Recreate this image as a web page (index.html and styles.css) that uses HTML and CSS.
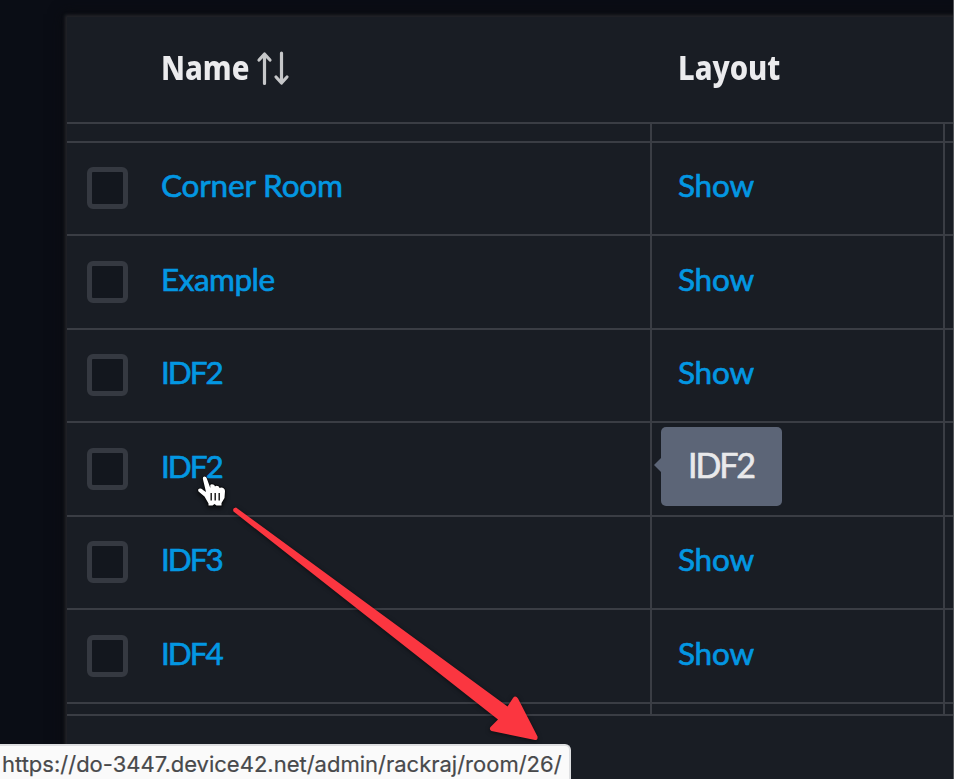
FILE: index.html
```html
<!DOCTYPE html>
<html lang="en">
<head>
<meta charset="utf-8">
<title>Rooms</title>
<link rel="stylesheet" href="styles.css">
</head>
<body>
<main class="panel">
  <div class="head">
    <div class="cell check"></div>
    <div class="cell name"><span class="label">Name</span><svg class="sort" width="34" height="36" viewBox="0 0 34 36"><path d="M8.500 32.500V3M3 9l5.500-6L14 9M25.500 2v29.500M20 26l5.500 6L31 26"/></svg></div>
    <div class="cell layout"><span class="label">Layout</span></div>
  </div>
  <div class="row spacer"><div class="cell main"></div><div class="cell layout"></div><div class="cell rest"></div></div>
  <div class="row"><div class="cell main"><span class="box"></span><a class="corner">Corner Room</a></div><div class="cell layout"><a class="show">Show</a></div><div class="cell rest"></div></div>
  <div class="row"><div class="cell main"><span class="box"></span><a class="example">Example</a></div><div class="cell layout"><a class="show">Show</a></div><div class="cell rest"></div></div>
  <div class="row"><div class="cell main"><span class="box"></span><a class="idf">IDF2</a></div><div class="cell layout"><a class="show">Show</a></div><div class="cell rest"></div></div>
  <div class="row"><div class="cell main"><span class="box"></span><a class="idf">IDF2</a></div><div class="cell layout"></div><div class="cell rest"></div></div>
  <div class="row"><div class="cell main"><span class="box"></span><a class="idf">IDF3</a></div><div class="cell layout"><a class="show">Show</a></div><div class="cell rest"></div></div>
  <div class="row"><div class="cell main"><span class="box"></span><a class="idf">IDF4</a></div><div class="cell layout"><a class="show">Show</a></div><div class="cell rest"></div></div>
  <div class="row foot"><div class="cell main"></div><div class="cell layout"></div><div class="cell rest"></div></div>
</main>
<div class="tooltip"><span>IDF2</span></div>
<svg class="overlay" width="954" height="779" viewBox="0 0 954 779">
  <path class="arrow" d="M233.500 511.500Q232 508 236 507.500L507.500 706.500L513 698Q515.500 695 518 698.500L537.500 736.500Q538 740 535 740L491.500 731Q488.500 729 491 726.500L498 719.500Z"/>
  <path class="hand" d="M203 479.500C202 476 206 475.500 207 479L210.300 488V485C211 483.500 214.500 484 215 486.500C216 485 219 485.500 219.500 488C221.500 486.500 225 488 225 491L224.500 498L221.500 503V505.500H216.500L214.500 504L212.500 505.500H208.500V503.500L204.500 496.500L198.500 491.500C197 488.500 200.500 487.500 203 490L206 492Z"/>
  <path class="creases" d="M211.200 493V500.500M215.200 493V500.500M219.200 493V500.500"/>
</svg>
<div class="status"><span>https://do-3447.device42.net/admin/rackraj/room/26/</span></div>
<div class="edge"></div>
</body>
</html>
```
FILE: styles.css
```css
* { box-sizing: border-box; }
body {
  margin: 0;
  width: 954px;
  height: 779px;
  padding: 17px 0 0 67px;
  overflow: hidden;
  position: relative;
  background: #0a0d15;
  font-family: Lato, sans-serif;
}
.panel {
  width: 900px;
  height: 780px;
  background: #191d24;
  box-shadow: 0 0 3px 2px #25262b, 0 0 14px 3px #0b0c0f;
}
.head {
  display: flex;
  height: 107px;
  padding-bottom: 4px;
  border-bottom: 2px solid #3a3d44;
  color: #ebebed;
  font: 800 33px "Noto Sans", sans-serif;
}
.head .cell { display: flex; align-items: center; }
.head .check { width: 94px; }
.head .name { width: 517px; }
.label { transform: scaleX(.885); transform-origin: left; }
.sort { margin: 2px 0 0 -5px; fill: none; stroke: #c6c7c9; stroke-width: 3.200; stroke-linecap: round; stroke-linejoin: round; }
.row {
  display: grid;
  grid-template-columns: 585px 293px 1fr;
  height: 93.5px;
}
.spacer { height: 16.75px; }
.foot { height: 14.25px; border-bottom: 2px solid #3a3d44; }
.row .cell {
  display: flex;
  align-items: center;
  border-top: 2px solid #3a3d44;
}
.spacer .cell { border-top: 0; }
.row .layout, .row .rest { border-left: 2px solid #3a3d44; margin-left: -2px; }
.row .main { padding-left: 20px; }
.row .layout { padding-left: 26px; }
.box {
  width: 41px;
  height: 42px;
  margin: 0 33px 1px 0;
  border: 5px solid #353941;
  border-radius: 6px;
  background: #13171e;
}
a, .tooltip {
  font-size: 31.5px;
  font-weight: 400;
  -webkit-text-stroke: .65px currentColor;
}
a { color: #0397e2; line-height: 40px; padding-bottom: 7px; }
.corner { letter-spacing: -.15px; }
.example { letter-spacing: -.5px; }
.idf { letter-spacing: -2px; }
.show { letter-spacing: -.2px; }
.tooltip {
  position: absolute;
  left: 661px;
  top: 427px;
  width: 121px;
  height: 79px;
  display: grid;
  place-items: center;
  padding: 0 1px 4px 0;
  border-radius: 5px;
  background: #5c6577;
  color: #e9e9eb;
  font-size: 34px;
  letter-spacing: -2.1px;
}
.tooltip::before {
  content: "";
  position: absolute;
  left: -7px;
  top: 31px;
  border: 7px solid transparent;
  border-left: 0;
  border-right-color: #5c6577;
}
.overlay { position: absolute; left: 0; top: 0; }
.arrow { fill: #fb3640; filter: drop-shadow(0 1px 2px #0008); }
.hand { fill: #fff; stroke: #08090b; stroke-width: 1.500; filter: drop-shadow(0 2px 2px #000a); paint-order: stroke; }
.creases { stroke: #111; stroke-width: 1.400; }
.status {
  position: absolute;
  left: 0;
  top: 744px;
  width: 571px;
  height: 35px;
  padding: 5px 0 0 2px;
  border: solid #dedfe1;
  border-width: 2px 2px 0 0;
  border-top-right-radius: 6px;
  background: #fafafa;
  color: #48494b;
  font: 22px/27px Inter, sans-serif;
  -webkit-text-stroke: .2px currentColor;
  white-space: nowrap;
}
.edge { position: absolute; right: 0; top: 0; width: 1px; height: 779px; background: #55575b; }
```
